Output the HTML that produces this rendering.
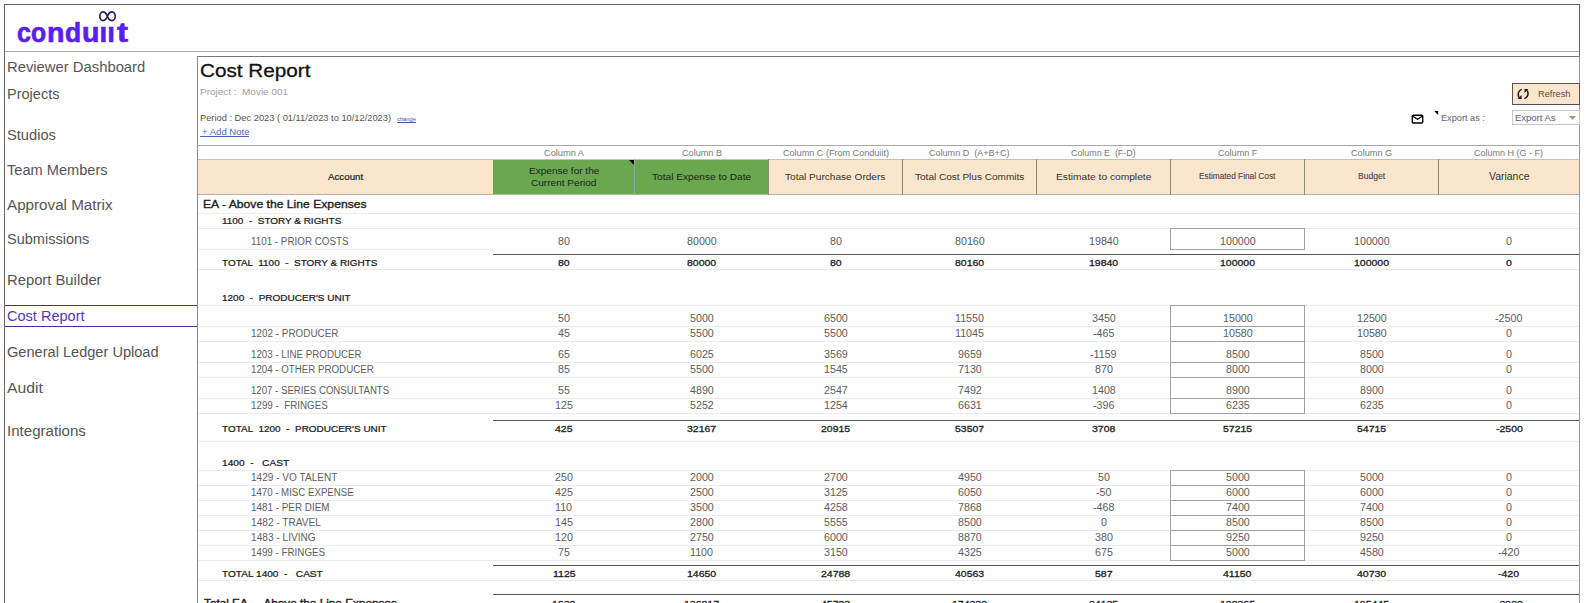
<!DOCTYPE html>
<html><head><meta charset="utf-8"><style>
html,body{margin:0;padding:0;width:1590px;height:603px;overflow:hidden;background:#fff;}
body{position:relative;font-family:"Liberation Sans",sans-serif;}
body>div,body>svg{position:absolute;}
body>div{line-height:0;white-space:pre;transform-origin:left 0;}
</style></head><body>
<div style="left:4px;top:4px;width:1px;height:599px;background:#666;"></div>
<div style="left:4px;top:4px;width:1576px;height:1px;background:#666;"></div>
<div style="left:1579px;top:4px;width:1px;height:53px;background:#666;"></div>
<div style="left:5px;top:51px;width:1574px;height:1px;background:#aaa;"></div>
<div style="left:197px;top:56px;width:1383px;height:1px;background:#777;"></div>
<div style="left:197px;top:56px;width:1px;height:547px;background:#8a8a8a;"></div>
<div style="left:1579px;top:57px;width:1px;height:546px;background:#999;"></div>
<div style="left:16.9px;top:19px;font-weight:bold;font-size:27.5px;line-height:27.5px;color:#5a1ff0;-webkit-text-stroke:0.7px #5a1ff0;transform:scaleX(0.91)">c</div>
<div style="left:30.8px;top:19px;font-weight:bold;font-size:27.5px;line-height:27.5px;color:#5a1ff0;-webkit-text-stroke:0.7px #5a1ff0;transform:scaleX(0.9)">o</div>
<div style="left:46.8px;top:19px;font-weight:bold;font-size:27.5px;line-height:27.5px;color:#5a1ff0;-webkit-text-stroke:0.7px #5a1ff0;transform:scaleX(1.04)">n</div>
<div style="left:65.4px;top:19px;font-weight:bold;font-size:27.5px;line-height:27.5px;color:#5a1ff0;-webkit-text-stroke:0.7px #5a1ff0;transform:scaleX(0.96)">d</div>
<div style="left:82px;top:19px;font-weight:bold;font-size:27.5px;line-height:27.5px;color:#5a1ff0;-webkit-text-stroke:0.7px #5a1ff0;transform:scaleX(1.04)">u</div>
<div style="left:99.6px;top:19px;font-weight:bold;font-size:27.5px;line-height:27.5px;color:#5a1ff0;-webkit-text-stroke:0.7px #5a1ff0;transform:scaleX(1.0)">&#305;</div>
<div style="left:107.3px;top:19px;font-weight:bold;font-size:27.5px;line-height:27.5px;color:#5a1ff0;-webkit-text-stroke:0.7px #5a1ff0;transform:scaleX(1.0)">&#305;</div>
<div style="left:117.1px;top:19px;font-weight:bold;font-size:27.5px;line-height:27.5px;color:#5a1ff0;-webkit-text-stroke:0.7px #5a1ff0;transform:scaleX(1.2)">t</div>
<svg style="left:95px;top:8px" width="26" height="20" viewBox="0 0 26 20"><path d="M12.4 8.2 C11.6 6.2 9.6 3.85 7.9 3.85 C6.22 3.85 4.85 5.8 4.85 8.2 C4.85 10.6 6.22 12.55 7.9 12.55 C9.6 12.55 11.6 10.2 12.4 8.2 C13.2 6.2 15.2 3.85 16.9 3.85 C18.58 3.85 20.25 5.8 20.25 8.2 C20.25 10.6 18.58 12.55 16.9 12.55 C15.2 12.55 13.2 10.2 12.4 8.2 Z" fill="none" stroke="#2a1a68" stroke-width="1.7"/></svg>
<div style="top:67.324px;font-size:14px;color:#555;left:6.97px;transform:scaleX(1.0576);">Reviewer Dashboard</div>
<div style="top:94.324px;font-size:14px;color:#555;left:6.98px;transform:scaleX(1.0383);">Projects</div>
<div style="top:135.324px;font-size:14px;color:#555;left:6.98px;transform:scaleX(1.0474);">Studios</div>
<div style="top:170.324px;font-size:14px;color:#555;left:6.98px;transform:scaleX(1.0423);">Team Members</div>
<div style="top:205.324px;font-size:14px;color:#555;left:6.96px;transform:scaleX(1.0852);">Approval Matrix</div>
<div style="top:239.324px;font-size:14px;color:#555;left:6.98px;transform:scaleX(1.0373);">Submissions</div>
<div style="top:280.324px;font-size:14px;color:#555;left:6.97px;transform:scaleX(1.0564);">Report Builder</div>
<div style="top:316.324px;font-size:14px;color:#5a35b0;left:6.98px;transform:scaleX(1.0379);">Cost Report</div>
<div style="top:352.324px;font-size:14px;color:#555;left:6.98px;transform:scaleX(1.0415);">General Ledger Upload</div>
<div style="top:388.324px;font-size:14px;color:#555;left:6.94px;transform:scaleX(1.1220);">Audit</div>
<div style="top:431.324px;font-size:14px;color:#555;left:6.96px;transform:scaleX(1.0776);">Integrations</div>
<div style="left:5px;top:305px;width:192px;height:1px;background:#4d2b9c;"></div>
<div style="left:5px;top:326px;width:192px;height:1px;background:#4d2b9c;"></div>
<div style="top:70.966px;font-size:19px;color:#111;-webkit-text-stroke:0.3px #111;left:199.95px;transform:scaleX(1.0902);">Cost Report</div>
<div style="top:92.083px;font-size:9.5px;color:#a0a0a0;left:199.98px;transform:scaleX(1.0484);">Project :  Movie 001</div>
<div style="top:118.181px;font-size:9px;color:#555;left:199.98px;transform:scaleX(1.0329);">Period : Dec 2023 ( 01/11/2023 to 10/12/2023)</div>
<div style="top:119.294px;font-size:5.5px;color:#3a5aa8;text-decoration:underline;left:397.47px;transform:scaleX(1.0519);">change</div>
<div style="top:132.083px;font-size:9.5px;color:#4a6ab8;left:202.00px;transform:scaleX(1.0050);">+ Add Note</div>
<div style="left:200px;top:136px;width:49px;height:1px;background:#4a6ab8;"></div>
<div style="left:1512px;top:83px;width:68px;height:22px;border:1px solid #555;box-sizing:border-box;background:#fce5cd"></div>
<div style="top:94.083px;font-size:9.5px;color:#5a4a3c;left:1538.01px;transform:scaleX(0.9774);">Refresh</div>
<svg style="left:1512px;top:84px" width="22" height="20" viewBox="0 0 22 20"><path d="M9.8 5.4 C7 6.4 6.1 9 6.3 11.2 C6.4 12.6 7 13.6 8 14.2" fill="none" stroke="#1e1a16" stroke-width="1.5"/><path d="M5.7 14.9 L9.6 14.9 L9.6 11.0 Z" fill="#1e1a16"/><path d="M12.4 14.6 C15.2 13.6 16.2 11 16 8.8 C15.9 7.4 15.3 6.4 14.3 5.8" fill="none" stroke="#1e1a16" stroke-width="1.5"/><path d="M16.5 5.0 L12.5 5.0 L12.5 8.9 Z" fill="#1e1a16"/></svg>
<div style="left:1512px;top:110px;width:68px;height:15px;border:1px solid #c8c8c8;box-sizing:border-box;background:#fff"></div>
<div style="top:118.083px;font-size:9.5px;color:#5a6070;left:1515.00px;transform:scaleX(0.9962);">Export As</div>
<svg style="left:1569px;top:116px" width="7" height="4" viewBox="0 0 7 4"><path d="M0 0 L7 0 L3.5 4 Z" fill="#a89a6a"/></svg>
<div style="top:118.137px;font-size:9.2px;color:#5a6478;left:1441.00px;transform:scaleX(0.9979);">Export as :</div>
<svg style="left:1434px;top:111px" width="5" height="5" viewBox="0 0 5 5"><path d="M0.2 0 L4.1 0 L4.1 4 Z" fill="#000"/></svg>
<svg style="left:1411px;top:114px" width="13" height="10" viewBox="0 0 13 10"><rect x="1.25" y="1.25" width="10.5" height="7.8" rx="1.2" fill="none" stroke="#000" stroke-width="1.4"/><path d="M1.8 2.2 L6.5 5.2 L11.2 2.2" fill="none" stroke="#000" stroke-width="1.2"/></svg>
<div style="left:197px;top:145px;width:1383px;height:1px;background:#aaa;"></div>
<div style="top:153.299px;font-size:8.3px;color:#777;left:544.14px;transform:scaleX(1.1126);">Column A</div>
<div style="top:153.299px;font-size:8.3px;color:#777;left:681.75px;transform:scaleX(1.0987);">Column B</div>
<div style="top:153.299px;font-size:8.3px;color:#777;left:782.65px;transform:scaleX(1.0942);">Column C (From Conduiit)</div>
<div style="top:153.299px;font-size:8.3px;color:#777;left:929.35px;transform:scaleX(1.0902);">Column D  (A+B+C)</div>
<div style="top:153.299px;font-size:8.3px;color:#777;left:1071.27px;transform:scaleX(1.0700);">Column E  (F-D)</div>
<div style="top:153.299px;font-size:8.3px;color:#777;left:1217.85px;transform:scaleX(1.0936);">Column F</div>
<div style="top:153.299px;font-size:8.3px;color:#777;left:1351.25px;transform:scaleX(1.1037);">Column G</div>
<div style="top:153.299px;font-size:8.3px;color:#777;left:1474.46px;transform:scaleX(1.0847);">Column H (G - F)</div>
<div style="left:198px;top:159px;width:1381px;height:36px;background:#fce5cd;"></div>
<div style="left:493px;top:159px;width:275px;height:36px;background:#6aa84f;"></div>
<div style="left:198px;top:159px;width:1381px;height:1px;background:#c9bfb3;"></div>
<div style="left:198px;top:194px;width:1381px;height:1px;background:#b8b0a8;"></div>
<div style="left:634px;top:159px;width:1px;height:36px;background:#a0a898;"></div>
<div style="left:768px;top:159px;width:1px;height:36px;background:#8a8a80;"></div>
<div style="left:902px;top:159px;width:1px;height:36px;background:#8a8a80;"></div>
<div style="left:1036px;top:159px;width:1px;height:36px;background:#8a8a80;"></div>
<div style="left:1170px;top:159px;width:1px;height:36px;background:#8a8a80;"></div>
<div style="left:1304px;top:159px;width:1px;height:36px;background:#8a8a80;"></div>
<div style="left:1438px;top:159px;width:1px;height:36px;background:#8a8a80;"></div>
<svg style="left:629px;top:160px" width="5" height="5" viewBox="0 0 5 5"><path d="M0 0 L5 0 L5 5 Z" fill="#000"/></svg>
<div style="top:177.299px;font-size:8.3px;color:#222;-webkit-text-stroke:0.2px #222;left:327.81px;transform:scaleX(1.1739);">Account</div>
<div style="top:171.074px;font-size:9.6px;color:#222;left:529.08px;transform:scaleX(1.0466);">Expense for the</div>
<div style="top:183.074px;font-size:9.6px;color:#222;left:531.38px;transform:scaleX(1.0493);">Current Period</div>
<div style="top:177.074px;font-size:9.6px;color:#222;left:651.87px;transform:scaleX(1.0562);">Total Expense to Date</div>
<div style="top:177.074px;font-size:9.6px;color:#333;left:785.47px;transform:scaleX(1.0515);">Total Purchase Orders</div>
<div style="top:177.074px;font-size:9.6px;color:#333;left:914.88px;transform:scaleX(1.0464);">Total Cost Plus Commits</div>
<div style="top:177.074px;font-size:9.6px;color:#333;left:1055.67px;transform:scaleX(1.0642);">Estimate to complete</div>
<div style="top:176.834px;font-size:8.2px;color:#444;-webkit-text-stroke:0.1px #444;left:1199.39px;transform:scaleX(1.0106);">Estimated Final Cost</div>
<div style="top:176.834px;font-size:8.2px;color:#444;-webkit-text-stroke:0.1px #444;left:1357.88px;transform:scaleX(1.0487);">Budget</div>
<div style="top:176.981px;font-size:10.3px;color:#333;left:1488.89px;transform:scaleX(1.0149);">Variance</div>
<div style="left:198px;top:213px;width:1381px;height:1px;background:#ebebeb;"></div>
<div style="left:198px;top:228px;width:1381px;height:1px;background:#ebebeb;"></div>
<div style="left:198px;top:269px;width:1381px;height:1px;background:#ebebeb;"></div>
<div style="left:198px;top:305px;width:1381px;height:1px;background:#ebebeb;"></div>
<div style="left:198px;top:326px;width:1381px;height:1px;background:#ebebeb;"></div>
<div style="left:198px;top:341px;width:1381px;height:1px;background:#ebebeb;"></div>
<div style="left:198px;top:362px;width:1381px;height:1px;background:#ebebeb;"></div>
<div style="left:198px;top:377px;width:1381px;height:1px;background:#ebebeb;"></div>
<div style="left:198px;top:398px;width:1381px;height:1px;background:#ebebeb;"></div>
<div style="left:198px;top:413px;width:1381px;height:1px;background:#ebebeb;"></div>
<div style="left:198px;top:441px;width:1381px;height:1px;background:#ebebeb;"></div>
<div style="left:198px;top:470px;width:1381px;height:1px;background:#ebebeb;"></div>
<div style="left:198px;top:485px;width:1381px;height:1px;background:#ebebeb;"></div>
<div style="left:198px;top:500px;width:1381px;height:1px;background:#ebebeb;"></div>
<div style="left:198px;top:515px;width:1381px;height:1px;background:#ebebeb;"></div>
<div style="left:198px;top:530px;width:1381px;height:1px;background:#ebebeb;"></div>
<div style="left:198px;top:545px;width:1381px;height:1px;background:#ebebeb;"></div>
<div style="left:198px;top:560px;width:1381px;height:1px;background:#ebebeb;"></div>
<div style="left:198px;top:580px;width:1381px;height:1px;background:#ebebeb;"></div>
<div style="left:198px;top:249px;width:295px;height:1px;background:#ebebeb;"></div>
<div style="left:493px;top:254px;width:1086px;height:1px;background:#555;"></div>
<div style="left:493px;top:420px;width:1086px;height:1px;background:#555;"></div>
<div style="left:493px;top:565px;width:1086px;height:1px;background:#555;"></div>
<div style="left:493px;top:594px;width:1086px;height:1px;background:#555;"></div>
<div style="top:204.285px;font-size:11.3px;color:#222;-webkit-text-stroke:0.35px #222;left:203.16px;transform:scaleX(1.0763);">EA - Above the Line Expenses</div>
<div style="top:221.245px;font-size:8.6px;color:#1a1a1a;-webkit-text-stroke:0.22px #1a1a1a;left:221.92px;transform:scaleX(1.1579);">1100  -  STORY &amp; RIGHTS</div>
<div style="top:242.010px;font-size:10.0px;color:#5e5e5e;left:251.01px;transform:scaleX(0.9828);">1101 - PRIOR COSTS</div>
<div style="top:242.010px;font-size:10.0px;color:#5c5c5c;left:558.05px;transform:scaleX(1.0700);">80</div>
<div style="top:242.010px;font-size:10.0px;color:#5c5c5c;left:686.62px;transform:scaleX(1.0700);">80000</div>
<div style="top:242.010px;font-size:10.0px;color:#5c5c5c;left:829.55px;transform:scaleX(1.0700);">80</div>
<div style="top:242.010px;font-size:10.0px;color:#5c5c5c;left:954.62px;transform:scaleX(1.0700);">80160</div>
<div style="top:242.010px;font-size:10.0px;color:#5c5c5c;left:1088.62px;transform:scaleX(1.0700);">19840</div>
<div style="top:242.010px;font-size:10.0px;color:#5c5c5c;left:1219.64px;transform:scaleX(1.0700);">100000</div>
<div style="top:242.010px;font-size:10.0px;color:#5c5c5c;left:1353.64px;transform:scaleX(1.0700);">100000</div>
<div style="top:242.010px;font-size:10.0px;color:#5c5c5c;left:1506.02px;transform:scaleX(1.0700);">0</div>
<div style="top:263.245px;font-size:8.6px;color:#1a1a1a;-webkit-text-stroke:0.22px #1a1a1a;left:221.92px;transform:scaleX(1.1569);">TOTAL  1100  -  STORY &amp; RIGHTS</div>
<div style="top:263.118px;font-size:9.4px;color:#222;-webkit-text-stroke:0.3px #222;left:558.15px;transform:scaleX(1.1200);">80</div>
<div style="top:263.118px;font-size:9.4px;color:#222;-webkit-text-stroke:0.3px #222;left:686.89px;transform:scaleX(1.1200);">80000</div>
<div style="top:263.118px;font-size:9.4px;color:#222;-webkit-text-stroke:0.3px #222;left:829.65px;transform:scaleX(1.1200);">80</div>
<div style="top:263.118px;font-size:9.4px;color:#222;-webkit-text-stroke:0.3px #222;left:954.89px;transform:scaleX(1.1200);">80160</div>
<div style="top:263.118px;font-size:9.4px;color:#222;-webkit-text-stroke:0.3px #222;left:1088.89px;transform:scaleX(1.1200);">19840</div>
<div style="top:263.118px;font-size:9.4px;color:#222;-webkit-text-stroke:0.3px #222;left:1219.96px;transform:scaleX(1.1200);">100000</div>
<div style="top:263.118px;font-size:9.4px;color:#222;-webkit-text-stroke:0.3px #222;left:1353.96px;transform:scaleX(1.1200);">100000</div>
<div style="top:263.118px;font-size:9.4px;color:#222;-webkit-text-stroke:0.3px #222;left:1506.08px;transform:scaleX(1.1200);">0</div>
<div style="top:298.245px;font-size:8.6px;color:#1a1a1a;-webkit-text-stroke:0.22px #1a1a1a;left:221.92px;transform:scaleX(1.1635);">1200  -  PRODUCER'S UNIT</div>
<div style="top:319.010px;font-size:10.0px;color:#5c5c5c;left:558.05px;transform:scaleX(1.0700);">50</div>
<div style="top:319.010px;font-size:10.0px;color:#5c5c5c;left:689.60px;transform:scaleX(1.0700);">5000</div>
<div style="top:319.010px;font-size:10.0px;color:#5c5c5c;left:823.60px;transform:scaleX(1.0700);">6500</div>
<div style="top:319.010px;font-size:10.0px;color:#5c5c5c;left:955.01px;transform:scaleX(1.0700);">11550</div>
<div style="top:319.010px;font-size:10.0px;color:#5c5c5c;left:1091.60px;transform:scaleX(1.0700);">3450</div>
<div style="top:319.010px;font-size:10.0px;color:#5c5c5c;left:1222.62px;transform:scaleX(1.0700);">15000</div>
<div style="top:319.010px;font-size:10.0px;color:#5c5c5c;left:1356.62px;transform:scaleX(1.0700);">12500</div>
<div style="top:319.010px;font-size:10.0px;color:#5c5c5c;left:1495.32px;transform:scaleX(1.0700);">-2500</div>
<div style="top:334.010px;font-size:10.0px;color:#5e5e5e;left:251.00px;transform:scaleX(0.9903);">1202 - PRODUCER</div>
<div style="top:334.010px;font-size:10.0px;color:#5c5c5c;left:558.05px;transform:scaleX(1.0700);">45</div>
<div style="top:334.010px;font-size:10.0px;color:#5c5c5c;left:689.60px;transform:scaleX(1.0700);">5500</div>
<div style="top:334.010px;font-size:10.0px;color:#5c5c5c;left:823.60px;transform:scaleX(1.0700);">5500</div>
<div style="top:334.010px;font-size:10.0px;color:#5c5c5c;left:955.01px;transform:scaleX(1.0700);">11045</div>
<div style="top:334.010px;font-size:10.0px;color:#5c5c5c;left:1092.79px;transform:scaleX(1.0700);">-465</div>
<div style="top:334.010px;font-size:10.0px;color:#5c5c5c;left:1222.62px;transform:scaleX(1.0700);">10580</div>
<div style="top:334.010px;font-size:10.0px;color:#5c5c5c;left:1356.62px;transform:scaleX(1.0700);">10580</div>
<div style="top:334.010px;font-size:10.0px;color:#5c5c5c;left:1506.02px;transform:scaleX(1.0700);">0</div>
<div style="top:355.010px;font-size:10.0px;color:#5e5e5e;left:251.01px;transform:scaleX(0.9755);">1203 - LINE PRODUCER</div>
<div style="top:355.010px;font-size:10.0px;color:#5c5c5c;left:558.05px;transform:scaleX(1.0700);">65</div>
<div style="top:355.010px;font-size:10.0px;color:#5c5c5c;left:689.60px;transform:scaleX(1.0700);">6025</div>
<div style="top:355.010px;font-size:10.0px;color:#5c5c5c;left:823.60px;transform:scaleX(1.0700);">3569</div>
<div style="top:355.010px;font-size:10.0px;color:#5c5c5c;left:957.60px;transform:scaleX(1.0700);">9659</div>
<div style="top:355.010px;font-size:10.0px;color:#5c5c5c;left:1090.21px;transform:scaleX(1.0700);">-1159</div>
<div style="top:355.010px;font-size:10.0px;color:#5c5c5c;left:1225.60px;transform:scaleX(1.0700);">8500</div>
<div style="top:355.010px;font-size:10.0px;color:#5c5c5c;left:1359.60px;transform:scaleX(1.0700);">8500</div>
<div style="top:355.010px;font-size:10.0px;color:#5c5c5c;left:1506.02px;transform:scaleX(1.0700);">0</div>
<div style="top:370.010px;font-size:10.0px;color:#5e5e5e;left:251.01px;transform:scaleX(0.9727);">1204 - OTHER PRODUCER</div>
<div style="top:370.010px;font-size:10.0px;color:#5c5c5c;left:558.05px;transform:scaleX(1.0700);">85</div>
<div style="top:370.010px;font-size:10.0px;color:#5c5c5c;left:689.60px;transform:scaleX(1.0700);">5500</div>
<div style="top:370.010px;font-size:10.0px;color:#5c5c5c;left:823.60px;transform:scaleX(1.0700);">1545</div>
<div style="top:370.010px;font-size:10.0px;color:#5c5c5c;left:957.60px;transform:scaleX(1.0700);">7130</div>
<div style="top:370.010px;font-size:10.0px;color:#5c5c5c;left:1094.57px;transform:scaleX(1.0700);">870</div>
<div style="top:370.010px;font-size:10.0px;color:#5c5c5c;left:1225.60px;transform:scaleX(1.0700);">8000</div>
<div style="top:370.010px;font-size:10.0px;color:#5c5c5c;left:1359.60px;transform:scaleX(1.0700);">8000</div>
<div style="top:370.010px;font-size:10.0px;color:#5c5c5c;left:1506.02px;transform:scaleX(1.0700);">0</div>
<div style="top:391.010px;font-size:10.0px;color:#5e5e5e;left:251.02px;transform:scaleX(0.9624);">1207 - SERIES CONSULTANTS</div>
<div style="top:391.010px;font-size:10.0px;color:#5c5c5c;left:558.05px;transform:scaleX(1.0700);">55</div>
<div style="top:391.010px;font-size:10.0px;color:#5c5c5c;left:689.60px;transform:scaleX(1.0700);">4890</div>
<div style="top:391.010px;font-size:10.0px;color:#5c5c5c;left:823.60px;transform:scaleX(1.0700);">2547</div>
<div style="top:391.010px;font-size:10.0px;color:#5c5c5c;left:957.60px;transform:scaleX(1.0700);">7492</div>
<div style="top:391.010px;font-size:10.0px;color:#5c5c5c;left:1091.60px;transform:scaleX(1.0700);">1408</div>
<div style="top:391.010px;font-size:10.0px;color:#5c5c5c;left:1225.60px;transform:scaleX(1.0700);">8900</div>
<div style="top:391.010px;font-size:10.0px;color:#5c5c5c;left:1359.60px;transform:scaleX(1.0700);">8900</div>
<div style="top:391.010px;font-size:10.0px;color:#5c5c5c;left:1506.02px;transform:scaleX(1.0700);">0</div>
<div style="top:406.010px;font-size:10.0px;color:#5e5e5e;left:251.01px;transform:scaleX(0.9799);">1299 -  FRINGES</div>
<div style="top:406.010px;font-size:10.0px;color:#5c5c5c;left:555.07px;transform:scaleX(1.0700);">125</div>
<div style="top:406.010px;font-size:10.0px;color:#5c5c5c;left:689.60px;transform:scaleX(1.0700);">5252</div>
<div style="top:406.010px;font-size:10.0px;color:#5c5c5c;left:823.60px;transform:scaleX(1.0700);">1254</div>
<div style="top:406.010px;font-size:10.0px;color:#5c5c5c;left:957.60px;transform:scaleX(1.0700);">6631</div>
<div style="top:406.010px;font-size:10.0px;color:#5c5c5c;left:1092.79px;transform:scaleX(1.0700);">-396</div>
<div style="top:406.010px;font-size:10.0px;color:#5c5c5c;left:1225.60px;transform:scaleX(1.0700);">6235</div>
<div style="top:406.010px;font-size:10.0px;color:#5c5c5c;left:1359.60px;transform:scaleX(1.0700);">6235</div>
<div style="top:406.010px;font-size:10.0px;color:#5c5c5c;left:1506.02px;transform:scaleX(1.0700);">0</div>
<div style="top:429.245px;font-size:8.6px;color:#1a1a1a;-webkit-text-stroke:0.22px #1a1a1a;left:221.92px;transform:scaleX(1.1606);">TOTAL  1200  -  PRODUCER'S UNIT</div>
<div style="top:429.118px;font-size:9.4px;color:#222;-webkit-text-stroke:0.3px #222;left:555.23px;transform:scaleX(1.1200);">425</div>
<div style="top:429.118px;font-size:9.4px;color:#222;-webkit-text-stroke:0.3px #222;left:686.89px;transform:scaleX(1.1200);">32167</div>
<div style="top:429.118px;font-size:9.4px;color:#222;-webkit-text-stroke:0.3px #222;left:820.89px;transform:scaleX(1.1200);">20915</div>
<div style="top:429.118px;font-size:9.4px;color:#222;-webkit-text-stroke:0.3px #222;left:954.89px;transform:scaleX(1.1200);">53507</div>
<div style="top:429.118px;font-size:9.4px;color:#222;-webkit-text-stroke:0.3px #222;left:1091.81px;transform:scaleX(1.1200);">3708</div>
<div style="top:429.118px;font-size:9.4px;color:#222;-webkit-text-stroke:0.3px #222;left:1222.89px;transform:scaleX(1.1200);">57215</div>
<div style="top:429.118px;font-size:9.4px;color:#222;-webkit-text-stroke:0.3px #222;left:1356.89px;transform:scaleX(1.1200);">54715</div>
<div style="top:429.118px;font-size:9.4px;color:#222;-webkit-text-stroke:0.3px #222;left:1495.56px;transform:scaleX(1.1200);">-2500</div>
<div style="top:463.245px;font-size:8.6px;color:#1a1a1a;-webkit-text-stroke:0.22px #1a1a1a;left:221.91px;transform:scaleX(1.1819);">1400  -   CAST</div>
<div style="top:478.010px;font-size:10.0px;color:#5e5e5e;left:251.00px;transform:scaleX(1.0070);">1429 - VO TALENT</div>
<div style="top:478.010px;font-size:10.0px;color:#5c5c5c;left:555.07px;transform:scaleX(1.0700);">250</div>
<div style="top:478.010px;font-size:10.0px;color:#5c5c5c;left:689.60px;transform:scaleX(1.0700);">2000</div>
<div style="top:478.010px;font-size:10.0px;color:#5c5c5c;left:823.60px;transform:scaleX(1.0700);">2700</div>
<div style="top:478.010px;font-size:10.0px;color:#5c5c5c;left:957.60px;transform:scaleX(1.0700);">4950</div>
<div style="top:478.010px;font-size:10.0px;color:#5c5c5c;left:1097.55px;transform:scaleX(1.0700);">50</div>
<div style="top:478.010px;font-size:10.0px;color:#5c5c5c;left:1225.60px;transform:scaleX(1.0700);">5000</div>
<div style="top:478.010px;font-size:10.0px;color:#5c5c5c;left:1359.60px;transform:scaleX(1.0700);">5000</div>
<div style="top:478.010px;font-size:10.0px;color:#5c5c5c;left:1506.02px;transform:scaleX(1.0700);">0</div>
<div style="top:493.010px;font-size:10.0px;color:#5e5e5e;left:251.02px;transform:scaleX(0.9673);">1470 - MISC EXPENSE</div>
<div style="top:493.010px;font-size:10.0px;color:#5c5c5c;left:555.07px;transform:scaleX(1.0700);">425</div>
<div style="top:493.010px;font-size:10.0px;color:#5c5c5c;left:689.60px;transform:scaleX(1.0700);">2500</div>
<div style="top:493.010px;font-size:10.0px;color:#5c5c5c;left:823.60px;transform:scaleX(1.0700);">3125</div>
<div style="top:493.010px;font-size:10.0px;color:#5c5c5c;left:957.60px;transform:scaleX(1.0700);">6050</div>
<div style="top:493.010px;font-size:10.0px;color:#5c5c5c;left:1095.77px;transform:scaleX(1.0700);">-50</div>
<div style="top:493.010px;font-size:10.0px;color:#5c5c5c;left:1225.60px;transform:scaleX(1.0700);">6000</div>
<div style="top:493.010px;font-size:10.0px;color:#5c5c5c;left:1359.60px;transform:scaleX(1.0700);">6000</div>
<div style="top:493.010px;font-size:10.0px;color:#5c5c5c;left:1506.02px;transform:scaleX(1.0700);">0</div>
<div style="top:508.010px;font-size:10.0px;color:#5e5e5e;left:251.01px;transform:scaleX(0.9876);">1481 - PER DIEM</div>
<div style="top:508.010px;font-size:10.0px;color:#5c5c5c;left:555.47px;transform:scaleX(1.0700);">110</div>
<div style="top:508.010px;font-size:10.0px;color:#5c5c5c;left:689.60px;transform:scaleX(1.0700);">3500</div>
<div style="top:508.010px;font-size:10.0px;color:#5c5c5c;left:823.60px;transform:scaleX(1.0700);">4258</div>
<div style="top:508.010px;font-size:10.0px;color:#5c5c5c;left:957.60px;transform:scaleX(1.0700);">7868</div>
<div style="top:508.010px;font-size:10.0px;color:#5c5c5c;left:1092.79px;transform:scaleX(1.0700);">-468</div>
<div style="top:508.010px;font-size:10.0px;color:#5c5c5c;left:1225.60px;transform:scaleX(1.0700);">7400</div>
<div style="top:508.010px;font-size:10.0px;color:#5c5c5c;left:1359.60px;transform:scaleX(1.0700);">7400</div>
<div style="top:508.010px;font-size:10.0px;color:#5c5c5c;left:1506.02px;transform:scaleX(1.0700);">0</div>
<div style="top:523.010px;font-size:10.0px;color:#5e5e5e;left:250.99px;transform:scaleX(1.0127);">1482 - TRAVEL</div>
<div style="top:523.010px;font-size:10.0px;color:#5c5c5c;left:555.07px;transform:scaleX(1.0700);">145</div>
<div style="top:523.010px;font-size:10.0px;color:#5c5c5c;left:689.60px;transform:scaleX(1.0700);">2800</div>
<div style="top:523.010px;font-size:10.0px;color:#5c5c5c;left:823.60px;transform:scaleX(1.0700);">5555</div>
<div style="top:523.010px;font-size:10.0px;color:#5c5c5c;left:957.60px;transform:scaleX(1.0700);">8500</div>
<div style="top:523.010px;font-size:10.0px;color:#5c5c5c;left:1100.52px;transform:scaleX(1.0700);">0</div>
<div style="top:523.010px;font-size:10.0px;color:#5c5c5c;left:1225.60px;transform:scaleX(1.0700);">8500</div>
<div style="top:523.010px;font-size:10.0px;color:#5c5c5c;left:1359.60px;transform:scaleX(1.0700);">8500</div>
<div style="top:523.010px;font-size:10.0px;color:#5c5c5c;left:1506.02px;transform:scaleX(1.0700);">0</div>
<div style="top:538.010px;font-size:10.0px;color:#5e5e5e;left:250.99px;transform:scaleX(1.0119);">1483 - LIVING</div>
<div style="top:538.010px;font-size:10.0px;color:#5c5c5c;left:555.07px;transform:scaleX(1.0700);">120</div>
<div style="top:538.010px;font-size:10.0px;color:#5c5c5c;left:689.60px;transform:scaleX(1.0700);">2750</div>
<div style="top:538.010px;font-size:10.0px;color:#5c5c5c;left:823.60px;transform:scaleX(1.0700);">6000</div>
<div style="top:538.010px;font-size:10.0px;color:#5c5c5c;left:957.60px;transform:scaleX(1.0700);">8870</div>
<div style="top:538.010px;font-size:10.0px;color:#5c5c5c;left:1094.57px;transform:scaleX(1.0700);">380</div>
<div style="top:538.010px;font-size:10.0px;color:#5c5c5c;left:1225.60px;transform:scaleX(1.0700);">9250</div>
<div style="top:538.010px;font-size:10.0px;color:#5c5c5c;left:1359.60px;transform:scaleX(1.0700);">9250</div>
<div style="top:538.010px;font-size:10.0px;color:#5c5c5c;left:1506.02px;transform:scaleX(1.0700);">0</div>
<div style="top:553.010px;font-size:10.0px;color:#5e5e5e;left:251.01px;transform:scaleX(0.9802);">1499 - FRINGES</div>
<div style="top:553.010px;font-size:10.0px;color:#5c5c5c;left:558.05px;transform:scaleX(1.0700);">75</div>
<div style="top:553.010px;font-size:10.0px;color:#5c5c5c;left:689.99px;transform:scaleX(1.0700);">1100</div>
<div style="top:553.010px;font-size:10.0px;color:#5c5c5c;left:823.60px;transform:scaleX(1.0700);">3150</div>
<div style="top:553.010px;font-size:10.0px;color:#5c5c5c;left:957.60px;transform:scaleX(1.0700);">4325</div>
<div style="top:553.010px;font-size:10.0px;color:#5c5c5c;left:1094.57px;transform:scaleX(1.0700);">675</div>
<div style="top:553.010px;font-size:10.0px;color:#5c5c5c;left:1225.60px;transform:scaleX(1.0700);">5000</div>
<div style="top:553.010px;font-size:10.0px;color:#5c5c5c;left:1359.60px;transform:scaleX(1.0700);">4580</div>
<div style="top:553.010px;font-size:10.0px;color:#5c5c5c;left:1498.29px;transform:scaleX(1.0700);">-420</div>
<div style="top:574.245px;font-size:8.6px;color:#1a1a1a;-webkit-text-stroke:0.22px #1a1a1a;left:221.91px;transform:scaleX(1.1742);">TOTAL 1400  -   CAST</div>
<div style="top:574.118px;font-size:9.4px;color:#222;-webkit-text-stroke:0.3px #222;left:552.70px;transform:scaleX(1.1200);">1125</div>
<div style="top:574.118px;font-size:9.4px;color:#222;-webkit-text-stroke:0.3px #222;left:686.89px;transform:scaleX(1.1200);">14650</div>
<div style="top:574.118px;font-size:9.4px;color:#222;-webkit-text-stroke:0.3px #222;left:820.89px;transform:scaleX(1.1200);">24788</div>
<div style="top:574.118px;font-size:9.4px;color:#222;-webkit-text-stroke:0.3px #222;left:954.89px;transform:scaleX(1.1200);">40563</div>
<div style="top:574.118px;font-size:9.4px;color:#222;-webkit-text-stroke:0.3px #222;left:1094.73px;transform:scaleX(1.1200);">587</div>
<div style="top:574.118px;font-size:9.4px;color:#222;-webkit-text-stroke:0.3px #222;left:1223.28px;transform:scaleX(1.1200);">41150</div>
<div style="top:574.118px;font-size:9.4px;color:#222;-webkit-text-stroke:0.3px #222;left:1356.89px;transform:scaleX(1.1200);">40730</div>
<div style="top:574.118px;font-size:9.4px;color:#222;-webkit-text-stroke:0.3px #222;left:1498.48px;transform:scaleX(1.1200);">-420</div>
<div style="top:603.285px;font-size:11.3px;color:#222;-webkit-text-stroke:0.4px #222;left:203.68px;transform:scaleX(1.0405);">Total EA  -  Above the Line Expenses</div>
<div style="top:604.118px;font-size:9.4px;color:#222;-webkit-text-stroke:0.3px #222;left:552.31px;transform:scaleX(1.1200);">1630</div>
<div style="top:604.118px;font-size:9.4px;color:#222;-webkit-text-stroke:0.3px #222;left:683.97px;transform:scaleX(1.1200);">126817</div>
<div style="top:604.118px;font-size:9.4px;color:#222;-webkit-text-stroke:0.3px #222;left:820.89px;transform:scaleX(1.1200);">45783</div>
<div style="top:604.118px;font-size:9.4px;color:#222;-webkit-text-stroke:0.3px #222;left:951.97px;transform:scaleX(1.1200);">174230</div>
<div style="top:604.118px;font-size:9.4px;color:#222;-webkit-text-stroke:0.3px #222;left:1088.89px;transform:scaleX(1.1200);">24135</div>
<div style="top:604.118px;font-size:9.4px;color:#222;-webkit-text-stroke:0.3px #222;left:1219.96px;transform:scaleX(1.1200);">198365</div>
<div style="top:604.118px;font-size:9.4px;color:#222;-webkit-text-stroke:0.3px #222;left:1353.96px;transform:scaleX(1.1200);">195445</div>
<div style="top:604.118px;font-size:9.4px;color:#222;-webkit-text-stroke:0.3px #222;left:1495.56px;transform:scaleX(1.1200);">-2920</div>
<div style="left:1170px;top:228px;width:135px;height:22px;border:1px solid #a0a0a0;box-sizing:border-box;background:transparent"></div>
<div style="left:1170px;top:305px;width:135px;height:22px;border:1px solid #a0a0a0;box-sizing:border-box;background:transparent"></div>
<div style="left:1170px;top:326px;width:135px;height:16px;border:1px solid #a0a0a0;box-sizing:border-box;background:transparent"></div>
<div style="left:1170px;top:341px;width:135px;height:22px;border:1px solid #a0a0a0;box-sizing:border-box;background:transparent"></div>
<div style="left:1170px;top:362px;width:135px;height:16px;border:1px solid #a0a0a0;box-sizing:border-box;background:transparent"></div>
<div style="left:1170px;top:377px;width:135px;height:22px;border:1px solid #a0a0a0;box-sizing:border-box;background:transparent"></div>
<div style="left:1170px;top:398px;width:135px;height:16px;border:1px solid #a0a0a0;box-sizing:border-box;background:transparent"></div>
<div style="left:1170px;top:470px;width:135px;height:16px;border:1px solid #a0a0a0;box-sizing:border-box;background:transparent"></div>
<div style="left:1170px;top:485px;width:135px;height:16px;border:1px solid #a0a0a0;box-sizing:border-box;background:transparent"></div>
<div style="left:1170px;top:500px;width:135px;height:16px;border:1px solid #a0a0a0;box-sizing:border-box;background:transparent"></div>
<div style="left:1170px;top:515px;width:135px;height:16px;border:1px solid #a0a0a0;box-sizing:border-box;background:transparent"></div>
<div style="left:1170px;top:530px;width:135px;height:16px;border:1px solid #a0a0a0;box-sizing:border-box;background:transparent"></div>
<div style="left:1170px;top:545px;width:135px;height:16px;border:1px solid #a0a0a0;box-sizing:border-box;background:transparent"></div>
</body></html>
